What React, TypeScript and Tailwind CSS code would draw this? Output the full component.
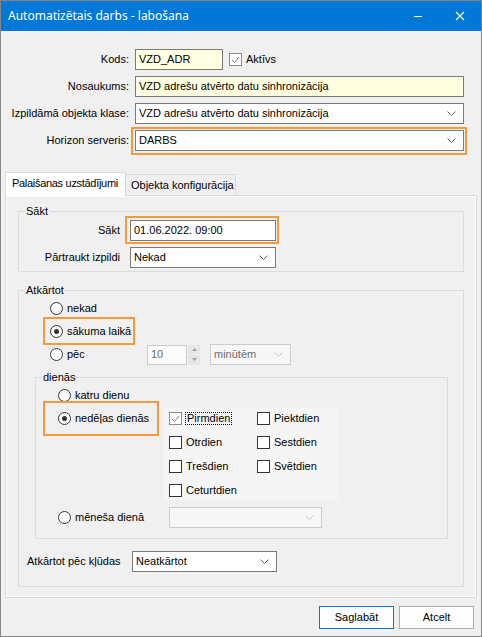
import React from "react";

type Kids = { children?: React.ReactNode };

function Chevron({ disabled = false }: { disabled?: boolean }) {
  return (
    <svg width="9" height="5" viewBox="0 0 9 5" className="shrink-0">
      <polyline
        points="0.5,0.5 4.5,4.5 8.5,0.5"
        fill="none"
        stroke={disabled ? "#c6c6c6" : "#5f5f5f"}
        strokeWidth="1"
      />
    </svg>
  );
}

function Select({ value, w, disabled = false }: { value?: string; w: string; disabled?: boolean }) {
  return (
    <div
      className={`${w} h-[21px] shrink-0 flex items-center justify-between pl-[3px] pr-[7px] border ${
        disabled ? "border-[#cccccc] bg-[#f7f7f7] text-[#6d6d6d]" : "border-[#7a7a7a] bg-white"
      }`}
    >
      <span>{value}</span>
      <Chevron disabled={disabled} />
    </div>
  );
}

function TextBox({ value, w, yellow = false }: { value: string; w: string; yellow?: boolean }) {
  return (
    <div
      className={`${w} h-[21px] shrink-0 flex items-center px-[3px] border border-[#7a7a7a] ${
        yellow ? "bg-[#ffffe1]" : "bg-white"
      }`}
    >
      {value}
    </div>
  );
}

// orange frame drawn over a control
function Ring({ className }: { className: string }) {
  return <div className={`absolute border-2 border-[#f7993b] pointer-events-none ${className}`} />;
}

function Radio({ label, checked = false }: { label: string; checked?: boolean }) {
  return (
    <span className="flex items-center gap-[4px] h-[13px]">
      <span className="w-[13px] h-[13px] shrink-0 rounded-full border border-[#333333] bg-white flex items-center justify-center">
        {checked && <span className="w-[5px] h-[5px] rounded-full bg-[#333333]" />}
      </span>
      <span className="whitespace-nowrap">{label}</span>
    </span>
  );
}

function Check({ label, checked = false, focus = false }: { label: string; checked?: boolean; focus?: boolean }) {
  return (
    <span className="flex items-center gap-[4px] h-[13px]">
      <span
        className={`w-[13px] h-[13px] shrink-0 border bg-white flex items-center justify-center ${
          checked ? "border-[#8c8c8c]" : "border-[#333333]"
        }`}
      >
        {checked && (
          <svg width="9" height="8" viewBox="0 0 9 8">
            <polyline points="1,4 3.5,6.5 8,1" fill="none" stroke="#7a7a7a" strokeWidth="1" />
          </svg>
        )}
      </span>
      <span
        className={`whitespace-nowrap ${
          focus ? "border border-dotted border-black leading-[11px] px-[1px] -ml-[1px]" : ""
        }`}
      >
        {label}
      </span>
    </span>
  );
}

function Group({ title, className, children }: { title: string; className: string } & Kids) {
  return (
    <fieldset className={`border border-[#dcdcdc] ${className}`}>
      <legend className="ml-[6px] px-[1px] leading-[13px]">{title}</legend>
      {children}
    </fieldset>
  );
}

function FormRow({ label, children }: { label: string } & Kids) {
  return (
    <div className="flex items-center h-[21px]">
      <span className="w-[128px] text-right whitespace-nowrap">{label}</span>
      <div className="ml-[6px] flex items-center">{children}</div>
    </div>
  );
}

function Spinner() {
  return (
    <div className="ml-[1px] w-[12px] h-[20px] flex flex-col gap-[1px]">
      <div className="flex-1 bg-[#e6e6e6] flex items-center justify-center">
        <svg width="5" height="3" viewBox="0 0 5 3">
          <polygon points="0,3 2.5,0 5,3" fill="#a0a0a0" />
        </svg>
      </div>
      <div className="flex-1 bg-[#e6e6e6] flex items-center justify-center">
        <svg width="5" height="3" viewBox="0 0 5 3">
          <polygon points="0,0 2.5,3 5,0" fill="#a0a0a0" />
        </svg>
      </div>
    </div>
  );
}

export default function App() {
  return (
    <div className="w-[482px] h-[637px] border border-[#858585] bg-[#f0f0f0] flex flex-col text-[11px] text-black font-['Liberation_Sans',Arial,sans-serif]">
      {/* title bar */}
      <div className="h-[30px] shrink-0 bg-[#0078d7] flex items-center text-white">
        <span className="pl-[7px] flex-1 text-[12px] font-['Noto_Sans',sans-serif]">
          Automatizētais darbs - labošana
        </span>
        <div className="w-[42px] h-full flex items-center justify-center">
          <svg width="10" height="10" viewBox="0 0 10 10">
            <line x1="1" y1="5.5" x2="9" y2="5.5" stroke="white" strokeWidth="1" />
          </svg>
        </div>
        <div className="w-[42px] h-full flex items-center justify-center">
          <svg width="10" height="10" viewBox="0 0 10 10">
            <path d="M1 1 L9 9 M9 1 L1 9" stroke="white" strokeWidth="1.2" />
          </svg>
        </div>
      </div>

      {/* header fields */}
      <div className="pt-[18px] flex flex-col gap-[6px]">
        <FormRow label="Kods:">
          <TextBox value="VZD_ADR" w="w-[88px]" yellow />
          <span className="ml-[6px]">
            <Check label="Aktīvs" checked />
          </span>
        </FormRow>
        <FormRow label="Nosaukums:">
          <TextBox value="VZD adrešu atvērto datu sinhronizācija" w="w-[329px]" yellow />
        </FormRow>
        <FormRow label="Izpildāmā objekta klase:">
          <Select value="VZD adrešu atvērto datu sinhronizācija" w="w-[329px]" />
        </FormRow>
        <FormRow label="Horizon serveris:">
          <div className="relative">
            <Select value="DARBS" w="w-[329px]" />
            <Ring className="-left-[4px] -right-[3px] -top-[3px] -bottom-[4px]" />
          </div>
        </FormRow>
      </div>

      {/* tabs */}
      <div className="mt-[21px] ml-[4px] flex items-end h-[24px]">
        <div className="relative z-10 w-[121px] h-[24px] bg-white border border-b-0 border-[#d9d9d9] pl-[6px] pb-[3px] flex items-center whitespace-nowrap tracking-[-0.3px]">
          Palaišanas uzstādījumi
        </div>
        <div className="w-[110px] h-[22px] border border-b-0 border-l-0 border-[#d9d9d9] pl-[5px] flex items-center whitespace-nowrap">
          Objekta konfigurācija
        </div>
      </div>

      <div className="-mt-[1px] mx-[4px] border border-[#d9d9d9] shadow-[inset_0_0_0_1px_#fbfbfb] pb-[10px]">
        <Group title="Sākt" className="mt-[9px] mx-[12px] pb-[3px]">
          <div className="pt-[2px] flex flex-col gap-[6px]">
            <div className="flex items-center h-[21px]">
              <span className="w-[101px] text-right">Sākt</span>
              <div className="relative ml-[10px]">
                <TextBox value="01.06.2022. 09:00" w="w-[146px]" />
                <Ring className="-left-[5px] -right-[3px] -top-[4px] -bottom-[3px]" />
              </div>
            </div>
            <div className="flex items-center h-[21px]">
              <span className="w-[101px] text-right">Pārtraukt izpildi</span>
              <div className="ml-[10px]">
                <Select value="Nekad" w="w-[146px]" />
              </div>
            </div>
          </div>
        </Group>

        <Group title="Atkārtot" className="mt-[12px] mx-[12px] pb-[14px]">
          <div className="pl-[31px]">
            <div className="h-[23px] flex items-center">
              <Radio label="nekad" />
            </div>
            <div className="h-[23px] flex items-center">
              <div className="relative w-[85px]">
                <Radio label="sākuma laikā" checked />
                <Ring className="-left-[7px] right-0 -top-[8px] -bottom-[7px]" />
              </div>
            </div>
            <div className="h-[23px] flex items-center">
              <span className="w-[97px]">
                <Radio label="pēc" />
              </span>
              <div className="w-[40px] h-[20px] border border-[#cccccc] bg-[#fbfbfb] text-[#6d6d6d] flex items-center px-[3px]">
                10
              </div>
              <Spinner />
              <div className="ml-[10px]">
                <Select value="minūtēm" w="w-[81px]" disabled />
              </div>
            </div>
          </div>

          <Group title="dienās" className="mt-[5px] ml-[16px] mr-[15px] pb-[10px]">
            <div className="pl-[22px]">
              <div className="h-[23px] flex items-center">
                <Radio label="katru dienu" />
              </div>
              <div className="flex items-start">
                <div className="w-[105px] h-[23px] flex items-center relative">
                  <Radio label="nedēļas dienās" checked />
                  <Ring className="-left-[15px] right-[4px] -top-[6px] -bottom-[6px]" />
                </div>
                <div className="mt-[1px] w-[175px] bg-[#f5f5f5] pl-[6px] pt-[4px] pb-[3px] grid grid-cols-[88px_1fr] gap-y-[11px]">
                  <Check label="Pirmdien" checked focus />
                  <Check label="Piektdien" />
                  <Check label="Otrdien" />
                  <Check label="Sestdien" />
                  <Check label="Trešdien" />
                  <Check label="Svētdien" />
                  <Check label="Ceturtdien" />
                </div>
              </div>
              <div className="mt-[7px] flex items-center h-[21px]">
                <span className="w-[111px]">
                  <Radio label="mēneša dienā" />
                </span>
                <Select w="w-[153px]" disabled />
              </div>
            </div>
          </Group>

          <div className="mt-[12px] pl-[8px] flex items-center h-[21px]">
            <span className="w-[105px] whitespace-nowrap">Atkārtot pēc kļūdas</span>
            <Select value="Neatkārtot" w="w-[145px]" />
          </div>
        </Group>
      </div>

      {/* dialog buttons */}
      <div className="mt-[8px] pr-[7px] flex justify-end gap-[5px]">
        <button className="w-[75px] h-[23px] border border-[#0078d7] bg-[#fdfdfd]">Saglabāt</button>
        <button className="w-[75px] h-[23px] border border-[#adadad] bg-[#fdfdfd]">Atcelt</button>
      </div>
    </div>
  );
}
